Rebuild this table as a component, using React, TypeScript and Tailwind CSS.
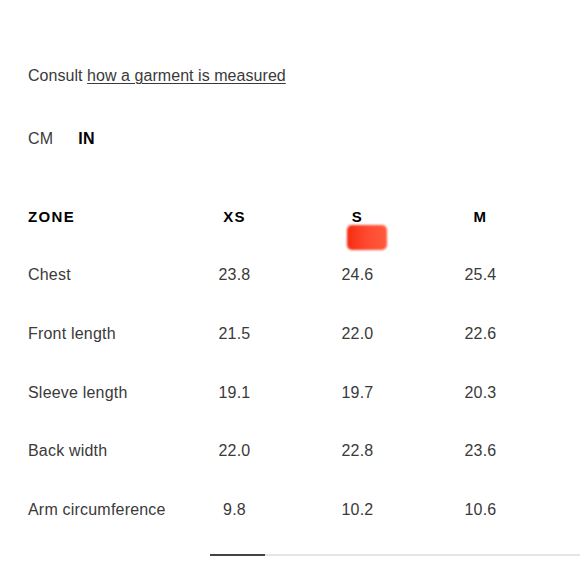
const rows = [
  { zone: "Chest", xs: "23.8", s: "24.6", m: "25.4" },
  { zone: "Front length", xs: "21.5", s: "22.0", m: "22.6" },
  { zone: "Sleeve length", xs: "19.1", s: "19.7", m: "20.3" },
  { zone: "Back width", xs: "22.0", s: "22.8", m: "23.6" },
  { zone: "Arm circumference", xs: "9.8", s: "10.2", m: "10.6" },
]

const App = () => {
  return (
    <div className="relative w-[580px] h-[580px] bg-white overflow-hidden font-['Liberation_Sans',Arial,sans-serif] text-[#3a3a3a] tracking-[0.2px]">
      <div className="pl-[28px] pt-[66px]">
        <p className="text-[16px] leading-[20px] tracking-[0.05px]">
          Consult <span className="underline underline-offset-2 decoration-1">how a garment is measured</span>
        </p>

        {/* units */}
        <div className="mt-[43px] flex gap-[25px] text-[16px] leading-[20px]">
          <span>CM</span>
          <span className="font-bold text-black">IN</span>
        </div>

        {/* table */}
        <div className="mt-[58px] grid grid-cols-[145px_123px_123px_123px]">
          <div className="h-[20px] flex items-center text-[15px] font-bold tracking-[0.09em] text-black">ZONE</div>
          <div className="h-[20px] flex items-center justify-center text-[15px] font-bold tracking-[0.09em] text-black">XS</div>
          <div className="h-[20px] flex items-center justify-center text-[15px] font-bold tracking-[0.09em] text-black">S</div>
          <div className="h-[20px] flex items-center justify-center text-[15px] font-bold tracking-[0.09em] text-black">M</div>
          {rows.map((r) => (
            <>
              <div key={r.zone} className="h-[58.75px] pt-[38px] text-[16px] leading-[20px]">{r.zone}</div>
              <div className="h-[58.75px] pt-[38px] text-center text-[16px] leading-[20px]">{r.xs}</div>
              <div className="h-[58.75px] pt-[38px] text-center text-[16px] leading-[20px]">{r.s}</div>
              <div className="h-[58.75px] pt-[38px] text-center text-[16px] leading-[20px]">{r.m}</div>
            </>
          ))}
        </div>
      </div>

      {/* scroll indicator */}
      <div className="absolute left-[210px] right-0 top-[554px] flex h-[2px]">
        <div className="w-[55px] bg-[#444]" />
        <div className="flex-1 bg-[#e6e6e6]" />
      </div>

      {/* red marker smudge */}
      <div className="absolute left-[347px] top-[225px] w-[40px] h-[25px] rounded-[5px] bg-gradient-to-r from-[#f52a0c] via-[#ff4a30] to-[#ff5a3c] blur-[1px]" />
    </div>
  )
}

export default App
